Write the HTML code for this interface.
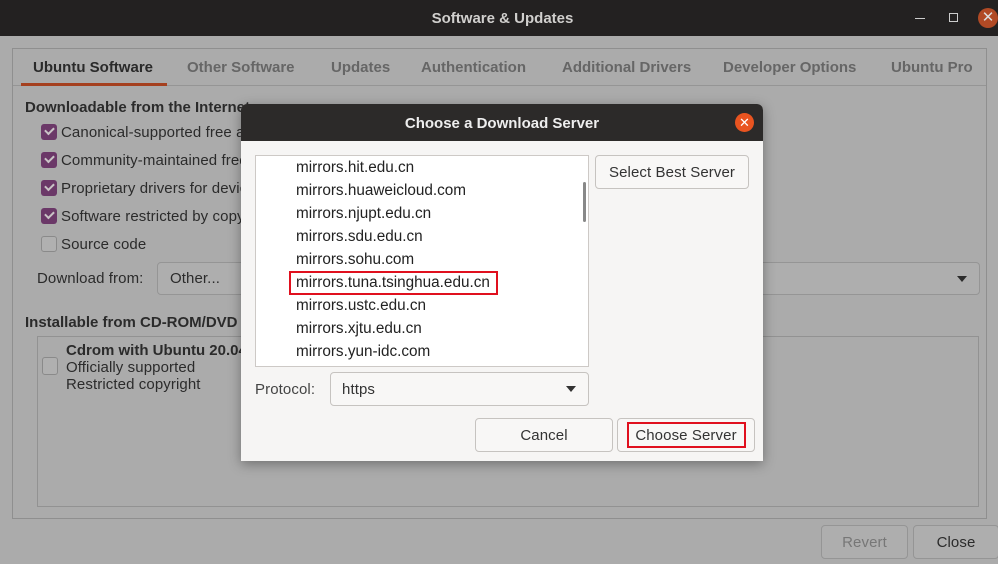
<!DOCTYPE html>
<html><head><meta charset="utf-8"><style>
*{box-sizing:border-box;margin:0;padding:0}
body{width:998px;height:564px;position:relative;overflow:hidden;background:#ababab;font-family:"Liberation Sans","DejaVu Sans",sans-serif;font-size:14px;color:#2b2b2b}
.a{position:absolute;white-space:nowrap}
.t{font-size:15px;letter-spacing:0.1px}
.tb{left:0;top:0;width:998px;height:36px;background:#232121}
.frame{left:12px;top:48px;width:975px;height:471px;border:1px solid #8f8f8f}
.cb{width:16px;height:16px;border-radius:3px;background:#6b3868}
.cb::after{content:"";position:absolute;left:4px;top:3px;width:7px;height:4px;border-left:2px solid #c9c3c6;border-bottom:2px solid #c9c3c6;transform:rotate(-45deg)}
.cbe{width:16px;height:16px;border-radius:3px;border:1px solid #8a8a8a;background:#b0b0b0}
.btn{border:1px solid #c6c3c0;border-radius:4px;background:#f8f7f6;text-align:center;color:#333}
.gbtn{border:1px solid #959595;border-radius:4px;background:#aeaeae;text-align:center}
.row{left:296px;font-size:15.3px;color:#222}
.tab{top:59px;font-weight:bold;font-size:15px;color:#666}
</style></head><body>
<div class="a tb"></div>
<div class="a" style="left:0;top:10px;width:1005px;text-align:center;color:#d0cfcd;font-weight:bold;font-size:15px">Software &amp; Updates</div>
<div class="a" style="left:915px;top:18px;width:10px;height:1px;background:#ccc"></div>
<div class="a" style="left:949px;top:13px;width:9px;height:9px;border:1.5px solid #ccc"></div>
<div class="a" style="left:978px;top:8px;width:20px;height:20px;border-radius:50%;background:#b14a25;color:#ddd;text-align:center;font-size:15px;line-height:20px">✕</div>

<div class="a frame"></div>
<div class="a" style="left:13px;top:85px;width:973px;height:1px;background:#959595"></div>
<div class="a" style="left:21px;top:83px;width:146px;height:3px;background:#a5401f"></div>
<div class="a tab" style="left:33px;color:#2a2a2a">Ubuntu Software</div>
<div class="a tab" style="left:187px">Other Software</div>
<div class="a tab" style="left:331px">Updates</div>
<div class="a tab" style="left:421px">Authentication</div>
<div class="a tab" style="left:562px">Additional Drivers</div>
<div class="a tab" style="left:723px">Developer Options</div>
<div class="a tab" style="left:891px">Ubuntu Pro</div>

<div class="a" style="top:99px;left:25px;font-weight:bold;font-size:15px">Downloadable from the Internet</div>
<div class="a cb" style="left:41px;top:124px"></div><div class="a t" style="left:61px;top:124px">Canonical-supported free and open-source software</div>
<div class="a cb" style="left:41px;top:152px"></div><div class="a t" style="left:61px;top:152px">Community-maintained free and open-source software</div>
<div class="a cb" style="left:41px;top:180px"></div><div class="a t" style="left:61px;top:180px">Proprietary drivers for devices</div>
<div class="a cb" style="left:41px;top:208px"></div><div class="a t" style="left:61px;top:208px">Software restricted by copyright</div>
<div class="a cbe" style="left:41px;top:236px"></div><div class="a t" style="left:61px;top:236px">Source code</div>
<div class="a t" style="left:37px;top:270px">Download from:</div>
<div class="a gbtn t" style="left:157px;top:262px;width:823px;height:33px;text-align:left;padding:7px 12px">Other...</div>
<div class="a" style="left:957px;top:276px;border-left:5px solid transparent;border-right:5px solid transparent;border-top:6px solid #2b2b2b"></div>

<div class="a" style="top:314px;left:25px;font-weight:bold;font-size:15px">Installable from CD-ROM/DVD</div>
<div class="a" style="left:37px;top:336px;width:942px;height:171px;border:1px solid #929292"></div>
<div class="a" style="left:66px;top:342px;font-weight:bold;font-size:15px">Cdrom with Ubuntu 20.04</div>
<div class="a t" style="left:66px;top:359px">Officially supported</div>
<div class="a t" style="left:66px;top:376px">Restricted copyright</div>
<div class="a cbe" style="left:42px;top:357px;height:18px"></div>

<div class="a gbtn t" style="left:821px;top:525px;width:87px;height:34px;line-height:33px;color:#777">Revert</div>
<div class="a gbtn t" style="left:913px;top:525px;width:86px;height:34px;line-height:33px">Close</div>

<div class="a" style="left:241px;top:104px;width:522px;height:357px;background:#f6f5f4;box-shadow:0 3px 12px rgba(0,0,0,.35);border-radius:6px 6px 0 0;overflow:hidden">
<div class="a" style="left:0;top:0;width:522px;height:37px;background:#2c2a29"></div>
<div class="a" style="left:0;top:11px;width:522px;text-align:center;color:#eee;font-weight:bold;font-size:15px">Choose a Download Server</div>
<div class="a" style="left:494px;top:9px;width:19px;height:19px;border-radius:50%;background:#e95420;color:#fff;text-align:center;font-size:13px;line-height:19px">✕</div>
</div>
<div class="a" style="left:255px;top:155px;width:334px;height:212px;background:#fff;border:1px solid #cdc9c6"></div>
<div class="a" style="left:583px;top:182px;width:3px;height:40px;background:#888;border-radius:2px"></div>
<div class="a row" style="top:159px">mirrors.hit.edu.cn</div>
<div class="a row" style="top:182px">mirrors.huaweicloud.com</div>
<div class="a row" style="top:205px">mirrors.njupt.edu.cn</div>
<div class="a row" style="top:228px">mirrors.sdu.edu.cn</div>
<div class="a row" style="top:251px">mirrors.sohu.com</div>
<div class="a row" style="top:274px">mirrors.tuna.tsinghua.edu.cn</div>
<div class="a row" style="top:297px">mirrors.ustc.edu.cn</div>
<div class="a row" style="top:320px">mirrors.xjtu.edu.cn</div>
<div class="a row" style="top:343px">mirrors.yun-idc.com</div>
<div class="a" style="left:289px;top:271px;width:209px;height:24px;border:2px solid #e0101e"></div>

<div class="a btn t" style="left:595px;top:155px;width:154px;height:34px;line-height:33px">Select Best Server</div>
<div class="a t" style="left:255px;top:381px;color:#444">Protocol:</div>
<div class="a btn t" style="left:330px;top:372px;width:259px;height:34px;text-align:left;padding:8px 11px">https</div>
<div class="a" style="left:566px;top:386px;border-left:5px solid transparent;border-right:5px solid transparent;border-top:6px solid #333"></div>
<div class="a btn t" style="left:475px;top:418px;width:138px;height:34px;line-height:33px">Cancel</div>
<div class="a btn t" style="left:617px;top:418px;width:138px;height:34px;line-height:33px">Choose Server</div>
<div class="a" style="left:627px;top:422px;width:119px;height:26px;border:2px solid #e0101e"></div>
</body></html>
